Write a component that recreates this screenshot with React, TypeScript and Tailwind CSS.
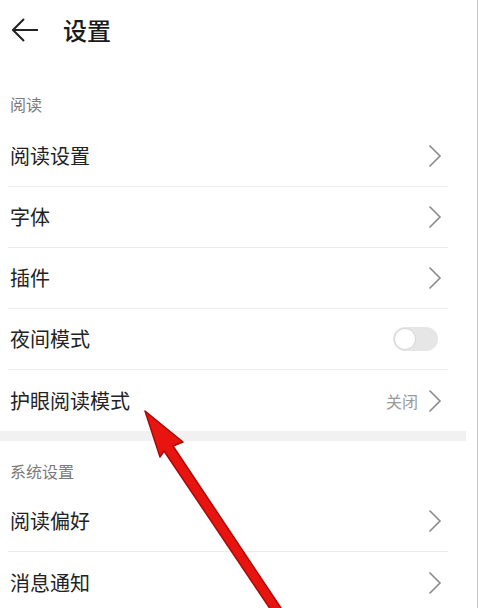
import React from "react";

const font = { fontFamily: '"Noto Sans CJK SC", "Noto Sans", sans-serif' };

function Chevron() {
  return (
    <svg width="14" height="24" viewBox="0 0 14 24" className="shrink-0">
      <polyline points="1.5,1.5 12,12 1.5,22.5" fill="none" stroke="#8a8a8a" strokeWidth="1.6" strokeLinejoin="miter" />
    </svg>
  );
}

function Row({ label, right, divider = true }: { label: string; right: React.ReactNode; divider?: boolean }) {
  return (
    <div className={`ml-[8px] w-[440px] h-[61px] flex items-center justify-between pl-[2px] pr-[6px] ${divider ? "border-b border-[#ececec]" : ""}`}>
      <span className="text-[20px] leading-[24px] text-[#222]">{label}</span>
      {right}
    </div>
  );
}

function Toggle() {
  return (
    <div className="w-[45px] h-[24px] rounded-full bg-[#e6e6e6] flex items-center p-[1px] mr-[4px]">
      <div className="w-[22px] h-[22px] rounded-full bg-white border border-[#d6d6d6]" />
    </div>
  );
}

export default function App() {
  return (
    <div className="relative w-[478px] h-[608px] overflow-hidden bg-white border-r border-[#c8c8c8]" style={font}>
      <div className="w-[466px]">
        <div className="h-[60px] flex items-center pl-[12px]">
          <svg width="26" height="24" viewBox="0 0 26 24">
            <polyline points="12,1 1,12 12,23" fill="none" stroke="#222" strokeWidth="2" />
            <line x1="1" y1="12" x2="26" y2="12" stroke="#222" strokeWidth="2" />
          </svg>
          <span className="ml-[25px] text-[24px] leading-[30px] text-[#1a1a1a] font-medium">设置</span>
        </div>
        <div className="pt-[34px] pb-[12px] pl-[10px] text-[16px] leading-[20px] text-[#7a7a7a]">阅读</div>
        <Row label="阅读设置" right={<Chevron />} />
        <Row label="字体" right={<Chevron />} />
        <Row label="插件" right={<Chevron />} />
        <Row label="夜间模式" right={<Toggle />} />
        <Row
          label="护眼阅读模式"
          divider={false}
          right={
            <div className="flex items-center gap-[10px]">
              <span className="text-[16px] leading-[20px] text-[#9a9a9a]">关闭</span>
              <Chevron />
            </div>
          }
        />
        <div className="h-[10px] bg-[#f1f1f1]" />
        <div className="pt-[20px] pb-[10px] pl-[10px] text-[16px] leading-[20px] text-[#7a7a7a]">系统设置</div>
        <Row label="阅读偏好" right={<Chevron />} />
        <Row label="消息通知" right={<Chevron />} divider={false} />
      </div>
      <svg className="absolute left-0 top-0 pointer-events-none" width="478" height="608" viewBox="0 0 478 608">
        <polygon
          points="145,411 183,442 173,446 289,620 281,625 164,451 160,457"
          fill="#e8140f"
          stroke="#a80a08"
          strokeWidth="1.5"
          strokeLinejoin="round"
        />
      </svg>
    </div>
  );
}
